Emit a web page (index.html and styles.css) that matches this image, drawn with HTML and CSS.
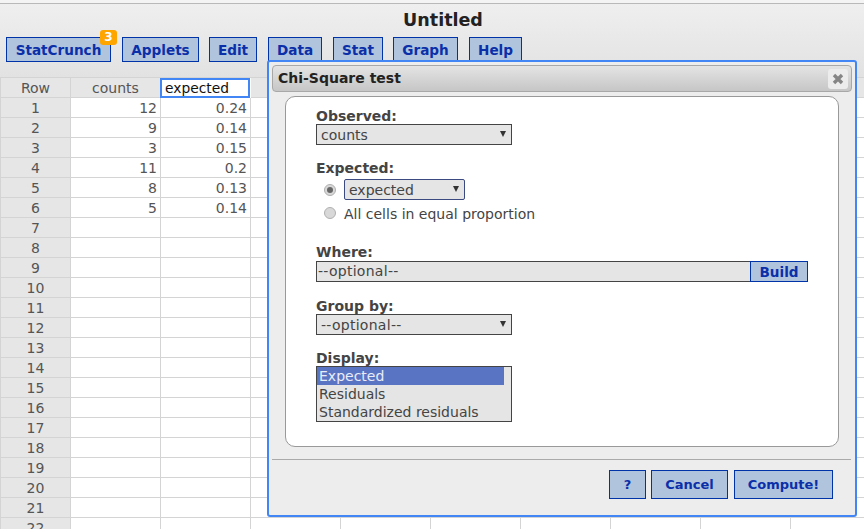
FILE: index.html
```html
<!DOCTYPE html>
<html lang="en">
<head>
<meta charset="utf-8">
<title>Untitled</title>
<link rel="stylesheet" href="styles.css">
</head>
<body>
<header class="top">
  <h1 class="title">Untitled</h1>
  <nav class="menu">
    <button class="btn m1">StatCrunch<span class="badge">3</span></button>
    <button class="btn m2">Applets</button>
    <button class="btn m3">Edit</button>
    <button class="btn m4">Data</button>
    <button class="btn m5">Stat</button>
    <button class="btn m6">Graph</button>
    <button class="btn m7">Help</button>
  </nav>
</header>
<main class="sheet" id="sheet">
  <div class="cell head">Row</div><div class="cell colh">counts</div><div class="cell colh active">expected</div><div class="cell colh"></div><div class="cell colh"></div><div class="cell colh"></div><div class="cell colh"></div><div class="cell colh"></div><div class="cell colh"></div><div class="cell colh"></div>
</main>
<section class="dialog">
  <div class="dtitle"><span>Chi-Square test</span>
    <span class="close"><svg width="14" height="14" viewBox="0 0 14 14"><path d="M3 3L11 11M11 3L3 11" stroke="#858585" stroke-width="3.4" fill="none"/></svg></span>
  </div>
  <div class="panel">
    <div class="label l1">Observed:</div>
    <div class="sel wide"><span>counts</span><i class="arrow"></i></div>
    <div class="label l2">Expected:</div>
    <div class="radio-row r1"><span class="radio on"></span><div class="sel focus"><span>expected</span><i class="arrow"></i></div></div>
    <div class="radio-row r2"><span class="radio"></span><span class="rtext">All cells in equal proportion</span></div>
    <div class="label l3">Where:</div>
    <div class="where"><div class="wfield optional">--optional--</div><button class="btn build">Build</button></div>
    <div class="label l4">Group by:</div>
    <div class="sel wide"><span class="optional">--optional--</span><i class="arrow"></i></div>
    <div class="label l5">Display:</div>
    <div class="list">
      <div class="opt chosen">Expected</div>
      <div class="opt">Residuals</div>
      <div class="opt">Standardized residuals</div>
    </div>
  </div>
  <div class="rule"></div>
  <div class="actions">
    <button class="btn act a1">?</button>
    <button class="btn act a2">Cancel</button>
    <button class="btn act a3">Compute!</button>
  </div>
</section>
<script src="app.js"></script>
</body>
</html>
```
FILE: app.js
```js
var data = [["12","0.24"],["9","0.14"],["3","0.15"],["11","0.2"],["8","0.13"],["5","0.14"]];
var sheet = document.getElementById("sheet");
var html = "";
for (var r = 1; r <= 22; r++) {
  var d = data[r - 1] || ["", ""];
  html += '<div class="cell head">' + r + '</div><div class="cell num">' + d[0] + '</div><div class="cell num">' + d[1] + '</div>';
  for (var c = 0; c < 7; c++) html += '<div class="cell"></div>';
}
sheet.insertAdjacentHTML("beforeend", html);
```
FILE: styles.css
```css
* { box-sizing: border-box; }
html, body { margin: 0; height: 100%; overflow: hidden; background: #fff; }
body { font-family: "DejaVu Sans", sans-serif; font-size: 14px; color: #444; }

.top {
  height: 77px;
  border-top: 3px solid #f4f4f4;
  background: linear-gradient(#efefef, #e2e2e2);
}
.top::before { content: ""; display: block; height: 1px; background: #b9b9b9; }
.title {
  margin: 0;
  height: 33px;
  padding: 6px 0 0 22px;
  text-align: center;
  font-size: 17.5px;
  line-height: 20px;
  font-weight: bold;
  color: #222;
}
.menu { display: flex; padding-left: 6px; }

.btn {
  font: bold 13.6px/16px "DejaVu Sans", sans-serif;
  color: #0b2fa8;
  background: #b0c4de;
  border: 1px solid #0033a8;
  padding: 0;
  height: 25px;
  position: relative;
}
.m1 { width: 105px; margin-right: 11px; }
.m2 { width: 77px; margin-right: 10px; }
.m3 { width: 48px; margin-right: 11px; }
.m4 { width: 54px; margin-right: 11px; }
.m5 { width: 50px; margin-right: 10px; }
.m6 { width: 65px; margin-right: 11px; }
.m7 { width: 53px; }
.badge {
  position: absolute; top: -8px; right: -7px;
  width: 17px; height: 15px;
  background: #ffa500; color: #fff;
  border-radius: 3px;
  font-size: 12px; line-height: 15px; text-align: center;
}

.sheet {
  display: grid;
  grid-template-columns: 71px repeat(9, 90px);
  grid-auto-rows: 20px;
  color: #555;
  border-top: 1px solid #d4d4d4;
}
.cell {
  border-right: 1px solid #d4d4d4;
  border-bottom: 1px solid #d4d4d4;
  line-height: 21px;
  font-size: 14px;
  padding: 0 3px;
}
.head { background: #e6e6e6; text-align: center; border-left: 1px solid #d4d4d4; padding: 0; }
.colh { text-align: center; background: #e6e6e6; }
.num { text-align: right; }
.active {
  border: 2px solid #4285f4;
  background: #fff;
  text-align: left;
  padding: 0 3px;
  color: #111;
  font-size: 13.8px;
  line-height: 17px;
  margin: 0 1px 0 -1px;
  height: 20px;
}

.dialog {
  position: absolute;
  left: 267px; top: 60px;
  width: 590px; height: 457px;
  background: #ededed;
  border: 2px solid #4285f4;
  border-radius: 3px;
  padding: 3px;
}
.dtitle {
  height: 27px;
  margin-bottom: 4px;
  display: flex; align-items: center; justify-content: space-between;
  padding: 0 3px 2px 5px;
  border: 1px solid #a8a8a8;
  border-radius: 4px;
  background: linear-gradient(#e4e4e4, #c6c6c6);
  font-weight: bold; font-size: 14px; color: #222;
}
.close {
  width: 20px; height: 20px;
  margin-bottom: -2px;
  display: flex; align-items: center; justify-content: center;
  background: #ececec;
  border-radius: 3px;
}
.panel {
  margin-left: 13px;
  width: 554px; height: 351px;
  background: #fff;
  border: 1px solid #999;
  border-radius: 10px;
  padding: 11px 30px 0;
}
.label { font-weight: bold; font-size: 14px; line-height: 16px; color: #444; }
.l2 { margin-top: 15px; }
.l3 { margin-top: 20px; margin-bottom: 1px; }
.l4 { margin-top: 16px; }
.l5 { margin-top: 15px; }

.sel {
  height: 21px;
  display: flex; align-items: center; justify-content: space-between;
  background: #e5e5e5;
  border: 1px solid #444;
  padding: 0 5px 0 4px;
  color: #444;
}
.wide { width: 196px; }
.arrow {
  width: 0; height: 0;
  margin-bottom: 2px;
  border-style: solid;
  border-width: 6px 3px 0;
  border-color: #333 transparent transparent;
}
.focus { width: 121px; border: 1px solid #3b4a80; border-radius: 2px; }
.radio-row { display: flex; align-items: center; padding-left: 8px; gap: 8px; }
.r1 { margin-top: 3px; }
.r2 { margin-top: 4px; height: 20px; }
.radio {
  width: 12px; height: 12px; border-radius: 50%;
  background: #d8d8d8; border: 1px solid #b0b0b0;
  flex: none; position: relative;
}
.r2 .radio { margin-top: -2px; }
.radio.on::after {
  content: ""; position: absolute; left: 2px; top: 2px;
  width: 6px; height: 6px; border-radius: 50%; background: #666;
}
.optional { letter-spacing: 0.28px; }
.where { display: flex; width: 492px; height: 21px; }
.wfield {
  flex: 1; background: #e5e5e5;
  border: solid #444; border-width: 1px 0 1px 1px;
  line-height: 19px; padding-left: 1px; color: #444;
}
.build { width: 58px; height: 21px; }
.list {
  width: 196px; height: 56px;
  background: #e5e5e5;
  border: 1px solid #444;
}
.opt { height: 18px; line-height: 18px; padding-left: 2px; width: 187px; }
.chosen { background: #5a74c4; color: #e8ecf8; }

.rule { height: 1px; background: #aaa; margin: 12px 0 0 0; width: 579px; }
.actions { display: flex; padding: 10px 0 0 337px; }
.act { height: 29px; font-size: 13px; }
.a1 { width: 37px; margin-right: 5px; }
.a2 { width: 77px; margin-right: 6px; }
.a3 { width: 99px; }
```
